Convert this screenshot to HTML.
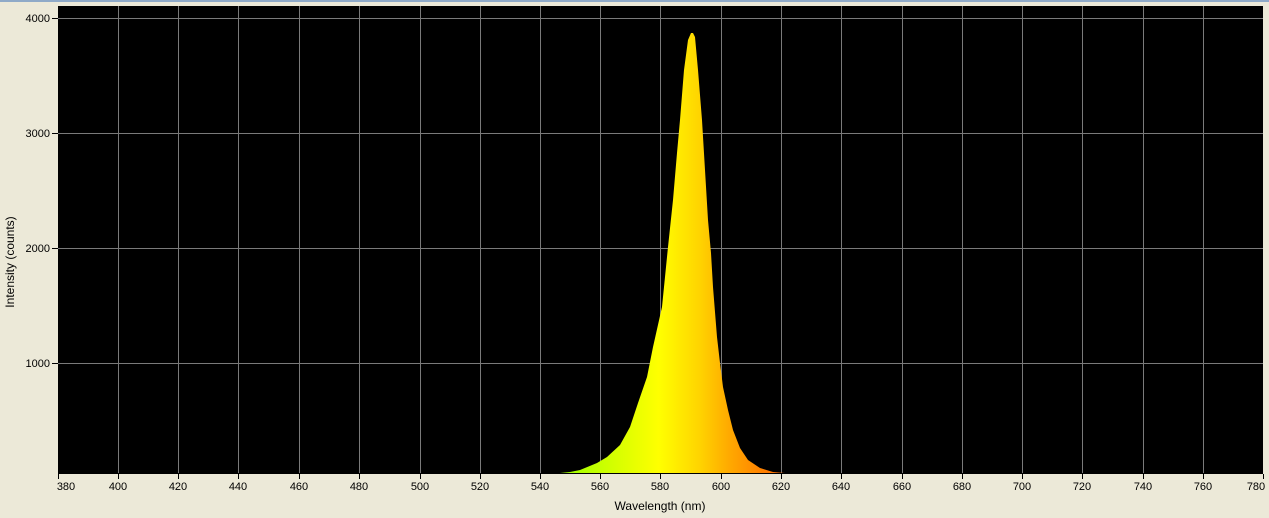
<!DOCTYPE html>
<html><head><meta charset="utf-8"><style>
html,body{margin:0;padding:0;background:#ECE9D8;width:1269px;height:518px;overflow:hidden}
svg{display:block}
text{font-family:"Liberation Sans",sans-serif;font-size:11px;fill:#000}
</style></head><body>
<svg width="1269" height="518" viewBox="0 0 1269 518" xmlns="http://www.w3.org/2000/svg">
<rect x="0" y="0" width="1269" height="518" fill="#ECE9D8"/>
<rect x="0" y="0" width="1269" height="2" fill="#8faac8"/>
<rect x="58" y="6" width="1205" height="468" fill="#000"/>
<defs>
<linearGradient id="g" gradientUnits="userSpaceOnUse" x1="560" y1="0" x2="785" y2="0">
<stop offset="0" stop-color="#99ff00"/>
<stop offset="0.2" stop-color="#ccff00"/>
<stop offset="0.44" stop-color="#ffff00"/>
<stop offset="0.62" stop-color="#ffd400"/>
<stop offset="0.75" stop-color="#ffaa00"/>
<stop offset="1" stop-color="#ff6600"/>
</linearGradient>
</defs>
<g stroke="#7a7a7a" stroke-width="1">
<line x1="118.5" y1="6" x2="118.5" y2="474"/><line x1="178.5" y1="6" x2="178.5" y2="474"/><line x1="238.5" y1="6" x2="238.5" y2="474"/><line x1="299.5" y1="6" x2="299.5" y2="474"/><line x1="359.5" y1="6" x2="359.5" y2="474"/><line x1="420.5" y1="6" x2="420.5" y2="474"/><line x1="480.5" y1="6" x2="480.5" y2="474"/><line x1="540.5" y1="6" x2="540.5" y2="474"/><line x1="600.5" y1="6" x2="600.5" y2="474"/><line x1="660.5" y1="6" x2="660.5" y2="474"/><line x1="721.5" y1="6" x2="721.5" y2="474"/><line x1="781.5" y1="6" x2="781.5" y2="474"/><line x1="841.5" y1="6" x2="841.5" y2="474"/><line x1="902.5" y1="6" x2="902.5" y2="474"/><line x1="962.5" y1="6" x2="962.5" y2="474"/><line x1="1022.5" y1="6" x2="1022.5" y2="474"/><line x1="1082.5" y1="6" x2="1082.5" y2="474"/><line x1="1143.5" y1="6" x2="1143.5" y2="474"/><line x1="1203.5" y1="6" x2="1203.5" y2="474"/>
<line x1="58" y1="18.5" x2="1263" y2="18.5"/><line x1="58" y1="133.5" x2="1263" y2="133.5"/><line x1="58" y1="248.5" x2="1263" y2="248.5"/><line x1="58" y1="363.5" x2="1263" y2="363.5"/>
</g>
<path fill="url(#g)" d="M548 474 L560 473 L570 472 L580 470 L597 463 L607 457 L620 445 L630 427 L638 403 L647 377 L653 347 L662 307 L668 247 L673 200 L677 153 L680 120 L684 70 L688 40 L691 33 L693 33 L695 37 L698 70 L702 120 L705 170 L708 220 L711 253 L713 287 L717 337 L720 363 L723 387 L728 410 L733 430 L740 448 L748 460 L760 468 L773 472 L785 473 L785 474 Z"/>
<g stroke="#000" stroke-width="1">
<line x1="58" y1="473.5" x2="1263" y2="473.5"/>
<line x1="52" y1="18.5" x2="58" y2="18.5"/><line x1="52" y1="133.5" x2="58" y2="133.5"/><line x1="52" y1="248.5" x2="58" y2="248.5"/><line x1="52" y1="363.5" x2="58" y2="363.5"/>
<line x1="58.5" y1="474" x2="58.5" y2="479"/><line x1="118.5" y1="474" x2="118.5" y2="479"/><line x1="178.5" y1="474" x2="178.5" y2="479"/><line x1="238.5" y1="474" x2="238.5" y2="479"/><line x1="299.5" y1="474" x2="299.5" y2="479"/><line x1="359.5" y1="474" x2="359.5" y2="479"/><line x1="420.5" y1="474" x2="420.5" y2="479"/><line x1="480.5" y1="474" x2="480.5" y2="479"/><line x1="540.5" y1="474" x2="540.5" y2="479"/><line x1="600.5" y1="474" x2="600.5" y2="479"/><line x1="660.5" y1="474" x2="660.5" y2="479"/><line x1="721.5" y1="474" x2="721.5" y2="479"/><line x1="781.5" y1="474" x2="781.5" y2="479"/><line x1="841.5" y1="474" x2="841.5" y2="479"/><line x1="902.5" y1="474" x2="902.5" y2="479"/><line x1="962.5" y1="474" x2="962.5" y2="479"/><line x1="1022.5" y1="474" x2="1022.5" y2="479"/><line x1="1082.5" y1="474" x2="1082.5" y2="479"/><line x1="1143.5" y1="474" x2="1143.5" y2="479"/><line x1="1203.5" y1="474" x2="1203.5" y2="479"/><line x1="1263.5" y1="474" x2="1263.5" y2="479"/>
</g>
<g text-anchor="end">
<text x="50" y="22">4000</text><text x="50" y="137">3000</text><text x="50" y="252">2000</text><text x="50" y="367">1000</text>
</g>
<g text-anchor="middle">
<text x="66" y="490">380</text><text x="118" y="490">400</text><text x="178" y="490">420</text><text x="238" y="490">440</text><text x="299" y="490">460</text><text x="359" y="490">480</text><text x="420" y="490">500</text><text x="480" y="490">520</text><text x="540" y="490">540</text><text x="600" y="490">560</text><text x="660" y="490">580</text><text x="721" y="490">600</text><text x="781" y="490">620</text><text x="841" y="490">640</text><text x="902" y="490">660</text><text x="962" y="490">680</text><text x="1022" y="490">700</text><text x="1082" y="490">720</text><text x="1143" y="490">740</text><text x="1203" y="490">760</text><text x="1256" y="490">780</text>
<text x="660" y="510" style="font-size:12px">Wavelength (nm)</text>
<text x="0" y="0" transform="translate(14,262) rotate(-90)" style="font-size:12px">Intensity (counts)</text>
</g>
</svg>
</body></html>
